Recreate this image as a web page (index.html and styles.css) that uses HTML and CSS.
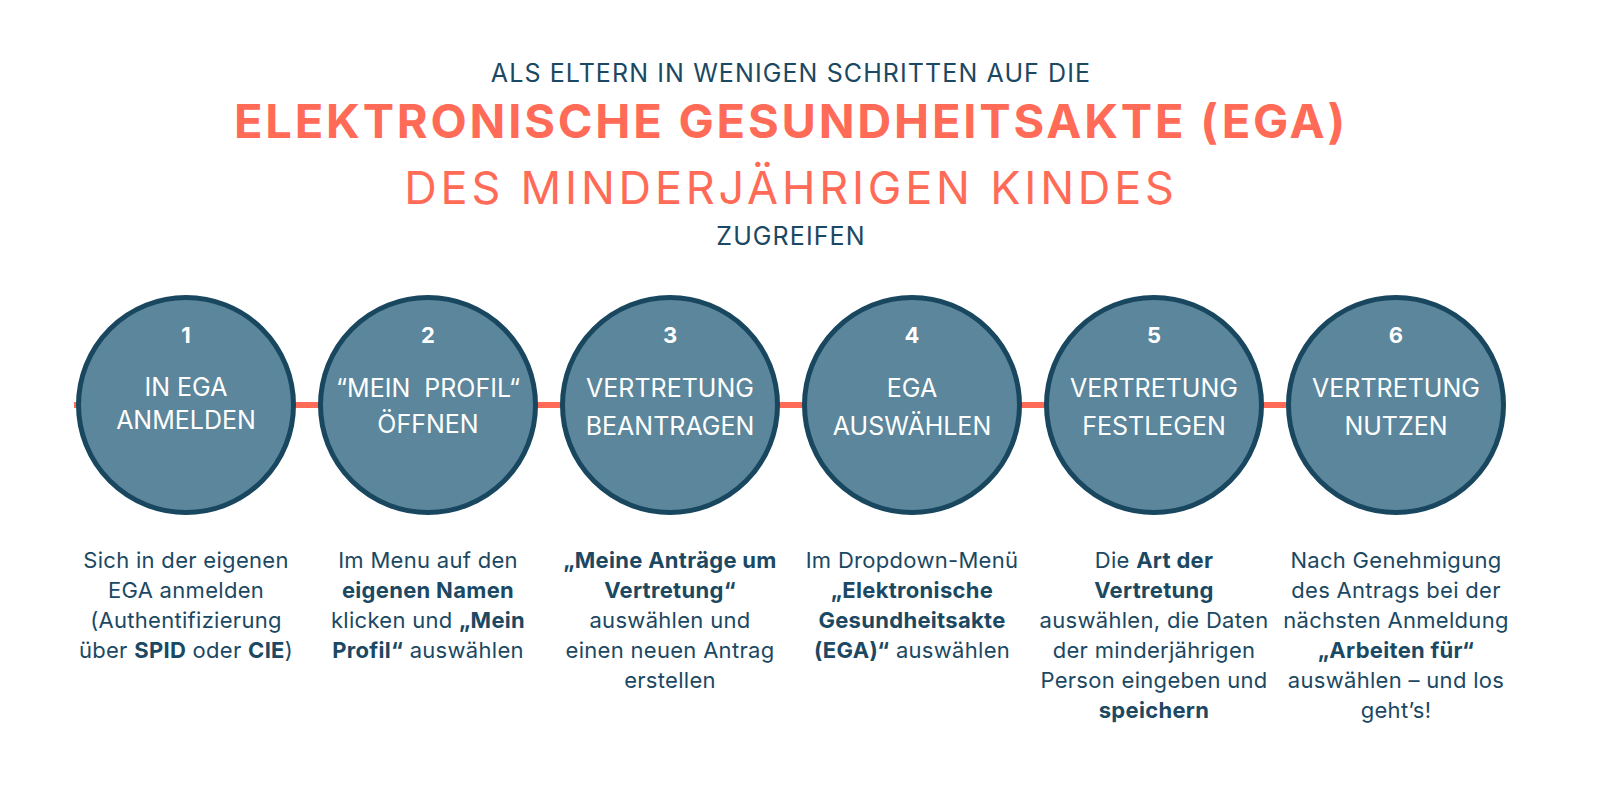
FILE: index.html
```html
<!DOCTYPE html>
<html lang="de">
<head>
<meta charset="utf-8">
<title>EGA Vertretung</title>
<link rel="stylesheet" href="styles.css">
</head>
<body>
<main class="page">
  <header class="header">
    <p class="kicker">ALS ELTERN IN WENIGEN SCHRITTEN AUF DIE</p>
    <h1 class="title">ELEKTRONISCHE GESUNDHEITSAKTE (EGA)</h1>
    <p class="subtitle">DES MINDERJÄHRIGEN KINDES</p>
    <p class="kicker kicker-end">ZUGREIFEN</p>
  </header>

  <section class="steps">
    <div class="step">
      <div class="circle">
        <span class="num">1</span>
        <span class="label label-tight">IN EGA<br>ANMELDEN</span>
      </div>
      <p class="desc">Sich in der eigenen<br>EGA anmelden<br>(Authentifizierung<br>über <b>SPID</b> oder <b>CIE</b>)</p>
    </div>
    <div class="step">
      <div class="circle">
        <span class="num">2</span>
        <span class="label label-mid">“MEIN&nbsp; PROFIL“<br>ÖFFNEN</span>
      </div>
      <p class="desc">Im Menu auf den<br><b>eigenen Namen</b><br>klicken und <b>„Mein<br>Profil“</b> auswählen</p>
    </div>
    <div class="step">
      <div class="circle">
        <span class="num">3</span>
        <span class="label">VERTRETUNG<br>BEANTRAGEN</span>
      </div>
      <p class="desc"><b>„Meine Anträge um<br>Vertretung“</b><br>auswählen und<br>einen neuen Antrag<br>erstellen</p>
    </div>
    <div class="step">
      <div class="circle">
        <span class="num">4</span>
        <span class="label">EGA<br>AUSWÄHLEN</span>
      </div>
      <p class="desc">Im Dropdown-Menü<br><b>„Elektronische<br>Gesundheitsakte<br>(EGA)“</b> auswählen</p>
    </div>
    <div class="step">
      <div class="circle">
        <span class="num">5</span>
        <span class="label">VERTRETUNG<br>FESTLEGEN</span>
      </div>
      <p class="desc">Die <b>Art der<br>Vertretung</b><br>auswählen, die Daten<br>der minderjährigen<br>Person eingeben und<br><b>speichern</b></p>
    </div>
    <div class="step">
      <div class="circle">
        <span class="num">6</span>
        <span class="label">VERTRETUNG<br>NUTZEN</span>
      </div>
      <p class="desc">Nach Genehmigung<br>des Antrags bei der<br>nächsten Anmeldung<br><b>„Arbeiten für“</b><br>auswählen – und los<br>geht’s!</p>
    </div>
  </section>
</main>
</body>
</html>
```

FILE: styles.css
```css
* { box-sizing: border-box; }

html, body {
  margin: 0;
  padding: 0;
  background: #ffffff;
}

body {
  font-family: Inter, "Noto Sans", "Liberation Sans", sans-serif;
  color: #1b4862;
  width: 1600px;
  height: 800px;
  overflow: hidden;
}

.page {
  width: 1600px;
}

.header {
  margin-left: 76px;
  width: 1430px;
  text-align: center;
  padding-top: 58px;
}

.header p, .header h1 {
  margin: 0;
}

.kicker {
  font-size: 25px;
  line-height: 30px;
  font-weight: 400;
  letter-spacing: 1.1px;
  color: #1b4862;
}

.title {
  margin-top: 8px !important;
  font-size: 47px;
  line-height: 50px;
  font-weight: 700;
  letter-spacing: 2.8px;
  color: #ff6b57;
}

.subtitle {
  margin-top: 17px !important;
  font-size: 45px;
  line-height: 50px;
  font-weight: 400;
  letter-spacing: 3.8px;
  color: #ff6b57;
}

.kicker-end {
  margin-top: 8px !important;
}

.steps {
  position: relative;
  display: grid;
  grid-template-columns: repeat(6, 220px);
  column-gap: 22px;
  margin-top: 44px;
  margin-left: 76px;
  width: 1430px;
}

.steps::before {
  content: "";
  position: absolute;
  left: -2px;
  right: 220px;
  top: 107px;
  height: 6px;
  background: #ff6b57;
  z-index: 0;
}

.step {
  position: relative;
  z-index: 1;
  display: flex;
  flex-direction: column;
  align-items: center;
}

.circle {
  width: 220px;
  height: 220px;
  border-radius: 50%;
  border: 5px solid #19475f;
  background: #5b869b;
  color: #ffffff;
  display: flex;
  flex-direction: column;
  align-items: center;
  padding-top: 22px;
  text-align: center;
}

.num {
  font-size: 22px;
  line-height: 26px;
  font-weight: 700;
}

.label {
  margin-top: 21px;
  font-size: 25px;
  line-height: 38px;
  font-weight: 400;
  white-space: nowrap;
}

.label-tight {
  line-height: 33px;
  margin-top: 23px;
}

.label-mid {
  line-height: 36px;
  margin-top: 22px;
}

.desc {
  margin: 30px -20px 0;
  width: 260px;
  text-align: center;
  font-size: 22px;
  line-height: 30px;
  letter-spacing: 0.3px;
  color: #1b4862;
  white-space: nowrap;
}

.desc b {
  font-weight: 700;
}
```
